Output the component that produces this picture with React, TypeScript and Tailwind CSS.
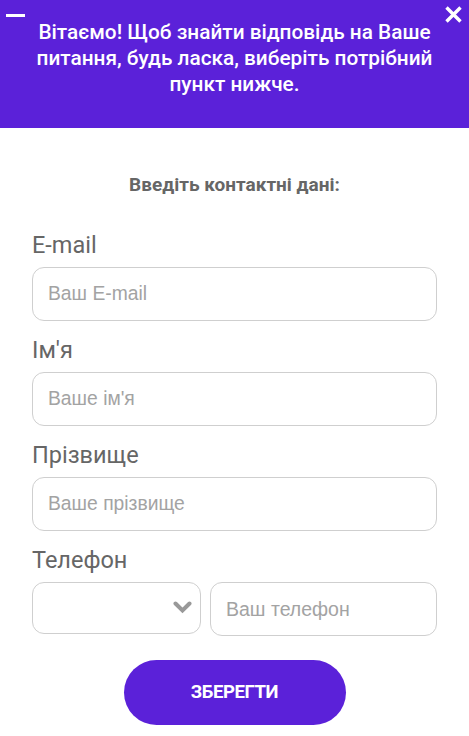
import React from "react";

const field = "w-full h-[54px] rounded-[12px] border border-[#cfcfcf] bg-white px-[15px] text-[19.3px] text-[#333] placeholder:text-[#a3a3a3] outline-none font-['Liberation_Sans',Arial,sans-serif]";

function Label({ children }: { children: React.ReactNode }) {
  return <div className="text-[23.5px] leading-[32px] text-[#666] mb-[6px]">{children}</div>;
}

export default function App() {
  return (
    <div className="w-[469px] h-[736px] bg-white overflow-hidden font-['Roboto',sans-serif]">
      <div className="relative h-[128px] bg-[#5b21d9] pt-[19px] px-[26px]">
        <div className="absolute left-[6px] top-[14px] w-[19px] h-[3px] bg-white" />
        <svg className="absolute left-[444px] top-[5px]" width="19" height="19" viewBox="0 0 19 19">
          <path d="M2.5 2.5 L16.5 16.5 M16.5 2.5 L2.5 16.5" stroke="white" strokeWidth="3.4" strokeLinecap="butt" />
        </svg>
        <p className="text-white text-[20.8px] leading-[26px] font-medium text-center">
          Вітаємо! Щоб знайти відповідь на Ваше питання, будь ласка, виберіть потрібний пункт нижче.
        </p>
      </div>
      <div className="px-[32px]">
        <div className="text-center text-[#666] font-bold text-[19px] leading-[22px] mt-[46px] mb-[33px]">
          Введіть контактні дані:
        </div>
        <div className="flex flex-col gap-[13px]">
          <div>
            <Label>E-mail</Label>
            <input className={field} placeholder="Ваш E-mail" />
          </div>
          <div>
            <Label>Ім'я</Label>
            <input className={field} placeholder="Ваше ім'я" />
          </div>
          <div>
            <Label>Прізвище</Label>
            <input className={field} placeholder="Ваше прізвище" />
          </div>
          <div>
            <Label>Телефон</Label>
            <div className="flex gap-[9px]">
              <div className="relative w-[169px] h-[52px] rounded-[12px] border border-[#cfcfcf] bg-white shrink-0">
                <svg className="absolute left-[140px] top-[18px]" width="19" height="13" viewBox="0 0 19 13">
                  <path d="M2.5 2.5 L9.5 9.5 L16.5 2.5" stroke="#999" strokeWidth="4" fill="none" strokeLinecap="round" strokeLinejoin="miter" />
                </svg>
              </div>
              <input className="flex-1 min-w-0 h-[54px] rounded-[12px] border border-[#cfcfcf] bg-white px-[15px] text-[19.5px] placeholder:text-[#a3a3a3] outline-none font-['Liberation_Sans',Arial,sans-serif]" placeholder="Ваш телефон" />
            </div>
          </div>
        </div>
        <div className="flex justify-center mt-[24px]">
          <button className="w-[222px] h-[65px] rounded-full bg-[#5b21d9] text-white font-bold text-[18.5px] tracking-[-0.4px]">
            ЗБЕРЕГТИ
          </button>
        </div>
      </div>
    </div>
  );
}
